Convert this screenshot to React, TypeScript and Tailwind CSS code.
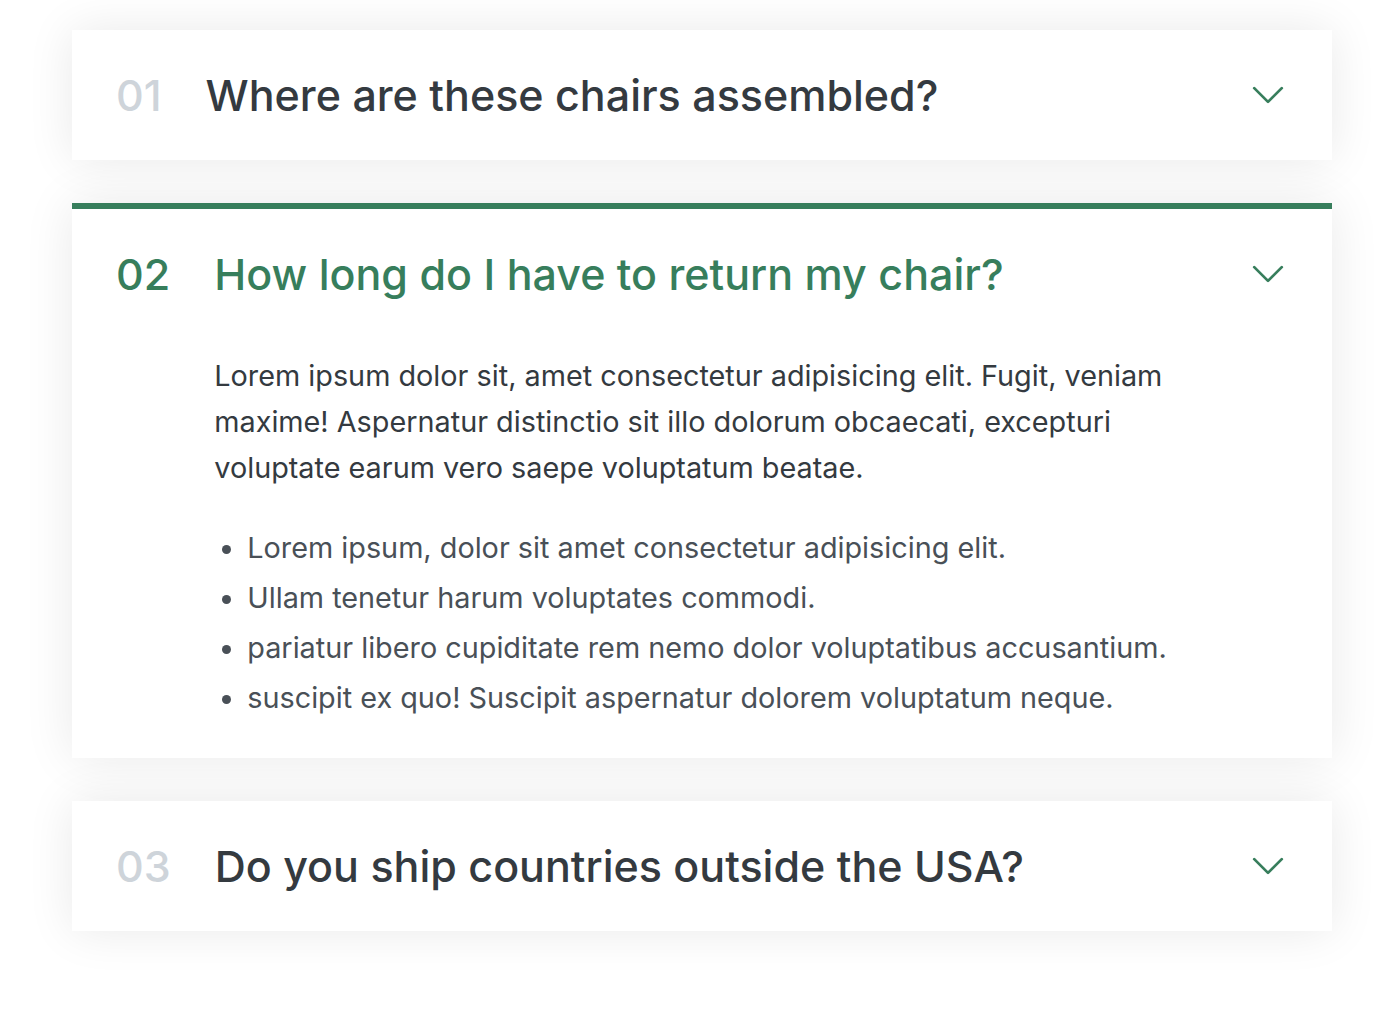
const faqs = [
  { num: "01", title: "Where are these chairs assembled?" },
  { num: "02", title: "How long do I have to return my chair?" },
  { num: "03", title: "Do you ship countries outside the USA?" },
];

function Chevron() {
  return (
    <svg className="w-[44px] h-[44px] text-[#377e5c]" fill="none" viewBox="0 0 24 24" stroke="currentColor">
      <path strokeLinecap="round" strokeLinejoin="round" strokeWidth={1.5} d="M19.5 8.25l-7.5 7.5-7.5-7.5" />
    </svg>
  );
}

export default function App() {
  const open = 1;
  return (
    <div className="min-h-screen bg-white font-['Inter',sans-serif]">
      <div className="w-[1260px] ml-[72px] pt-[30px] pb-16 flex flex-col gap-[43px]">
        {faqs.map((f, i) => {
          const isOpen = i === open;
          return (
            <div
              key={f.num}
              className={`bg-white shadow-[0_0_48px_rgba(0,0,0,0.09)] pl-[44px] pr-[42px] pt-[38px] grid grid-cols-[auto_1fr_auto] gap-x-[44px] items-center ${
                isOpen ? "border-t-[6px] border-[#377e5c] pb-[35px]" : "pb-[38px]"
              }`}
            >
              <p className={`text-[43px] leading-[54px] font-medium ${isOpen ? "text-[#377e5c]" : "text-[#ced4da]"}`}>
                {f.num}
              </p>
              <p className={`text-[43px] leading-[54px] font-medium ${isOpen ? "text-[#377e5c]" : "text-[#343a40]"}`}>
                {f.title}
              </p>
              <Chevron />
              {isOpen && (
                <div className="col-start-2 col-end-3 mt-[52px]">
                  <p className="text-[28.8px] leading-[46px] text-[#343a40] mb-[32px]">
                    Lorem ipsum dolor sit, amet consectetur adipisicing elit. Fugit, veniam maxime! Aspernatur distinctio sit illo dolorum obcaecati, excepturi voluptate earum vero saepe voluptatum beatae.
                  </p>
                  <ul className="list-disc pl-[33px] text-[28.8px] leading-[50px] text-[#495057]">
                    <li>Lorem ipsum, dolor sit amet consectetur adipisicing elit.</li>
                    <li>Ullam tenetur harum voluptates commodi.</li>
                    <li>pariatur libero cupiditate rem nemo dolor voluptatibus accusantium.</li>
                    <li>suscipit ex quo! Suscipit aspernatur dolorem voluptatum neque.</li>
                  </ul>
                </div>
              )}
            </div>
          );
        })}
      </div>
    </div>
  );
}
